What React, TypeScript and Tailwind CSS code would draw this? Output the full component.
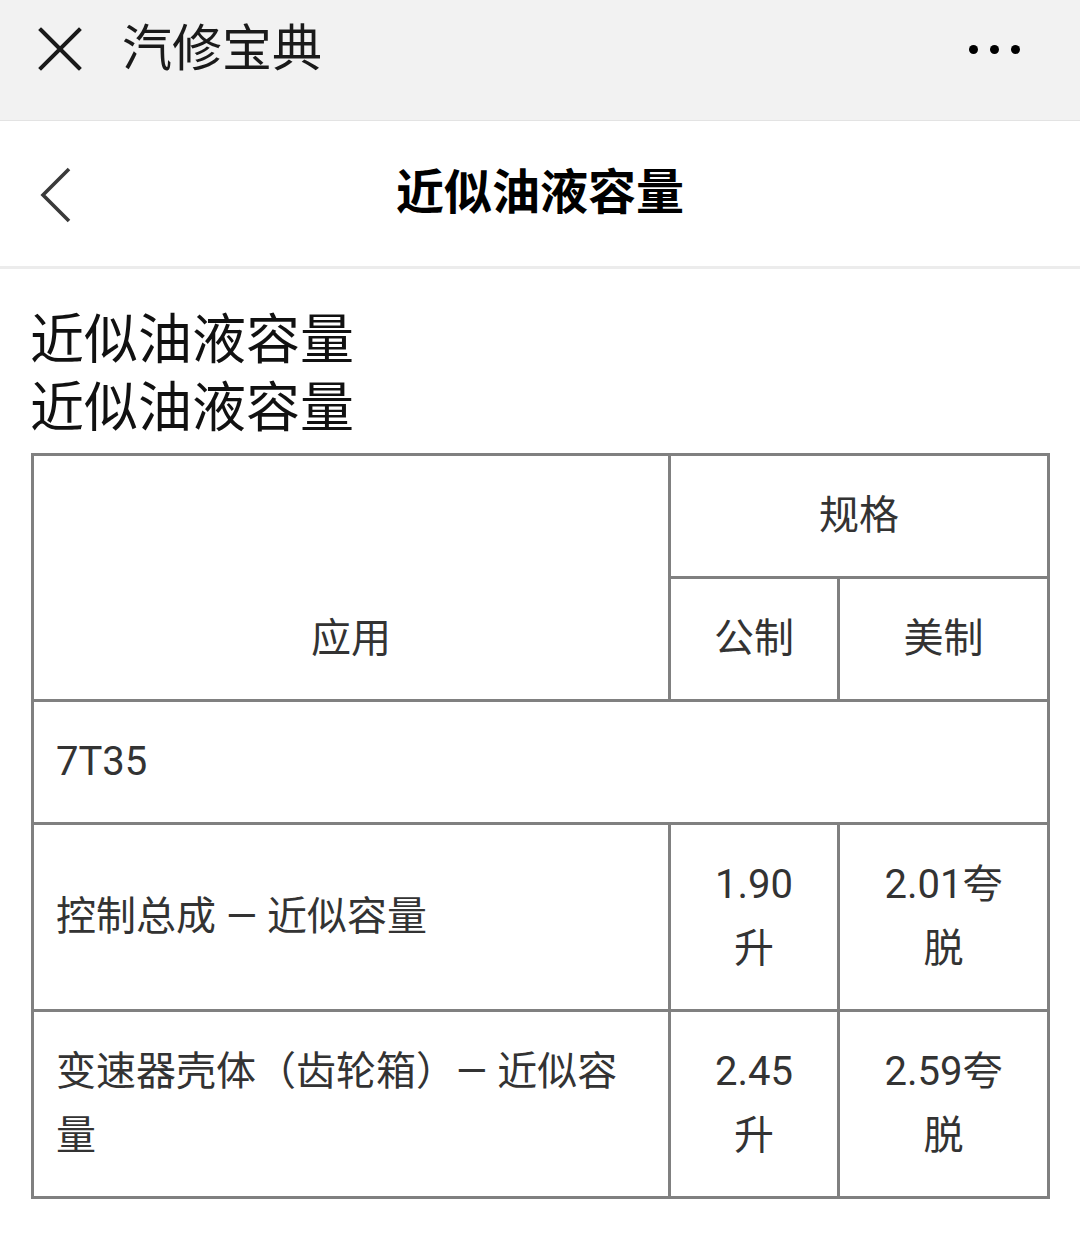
import React from "react";

function CloseIcon() {
  return (
    <svg width="44" height="44" viewBox="0 0 44 44" fill="none">
      <path d="M3 3L41 41M41 3L3 41" stroke="#1a1a1a" strokeWidth="4" strokeLinecap="square" />
    </svg>
  );
}

function BackIcon() {
  return (
    <svg width="36" height="58" viewBox="0 0 36 58" fill="none">
      <path d="M32 3L6 29L32 55" stroke="#3a3a3a" strokeWidth="3.6" />
    </svg>
  );
}

const cell = "border-[3px] border-[#808080] px-[22px] py-[28px] font-normal";

export default function App() {
  return (
    <div className="min-h-[1242px] bg-white font-[Roboto,'Noto_Sans_CJK_SC',sans-serif]">
      {/* top bar */}
      <div className="flex h-[121px] items-center border-b border-[#e3e3e3] bg-[#f2f2f2] pl-[38px] pr-[60px]">
        <div className="-mt-[22px] flex items-center">
          <CloseIcon />
          <span className="ml-[40px] text-[50px] leading-none text-[#1a1a1a]">汽修宝典</span>
        </div>
        <div className="ml-auto -mt-[22px] flex items-center gap-[12px]">
          <span className="h-[9px] w-[9px] rounded-full bg-black" />
          <span className="h-[9px] w-[9px] rounded-full bg-black" />
          <span className="h-[9px] w-[9px] rounded-full bg-black" />
        </div>
      </div>

      {/* page header */}
      <div className="relative flex h-[148px] items-center justify-center border-b-[3px] border-[#ececec]">
        <div className="absolute left-[37px] top-[45px]">
          <BackIcon />
        </div>
        <h1 className="-mt-[2px] text-[48px] font-bold leading-none text-black">近似油液容量</h1>
      </div>

      {/* content */}
      <div className="pt-[38px]">
        <div className="px-[30px] text-[54px] leading-[68px] text-[#111]">
          <p>近似油液容量</p>
          <p>近似油液容量</p>
        </div>

        <table className="ml-[31px] mt-[10px] w-[1016px] table-fixed border-collapse text-[40px] leading-[64px] text-[#333]">
          <colgroup>
            <col className="w-[637px]" />
            <col className="w-[169px]" />
            <col className="w-[210px]" />
          </colgroup>
          <thead>
            <tr>
              <th rowSpan={2} className={`${cell} text-center align-bottom`}>应用</th>
              <th colSpan={2} className={`${cell} text-center`}>规格</th>
            </tr>
            <tr>
              <th className={`${cell} text-center`}>公制</th>
              <th className={`${cell} text-center`}>美制</th>
            </tr>
          </thead>
          <tbody>
            <tr>
              <td colSpan={3} className={`${cell} text-left`}>7T35</td>
            </tr>
            <tr>
              <td className={`${cell} text-left`}>控制总成 — 近似容量</td>
              <td className={`${cell} text-center`}>1.90<br />升</td>
              <td className={`${cell} text-center`}>2.01夸<br />脱</td>
            </tr>
            <tr>
              <td className={`${cell} text-left`}>变速器壳体（齿轮箱）— 近似容量</td>
              <td className={`${cell} text-center`}>2.45<br />升</td>
              <td className={`${cell} text-center`}>2.59夸<br />脱</td>
            </tr>
          </tbody>
        </table>
      </div>
    </div>
  );
}
